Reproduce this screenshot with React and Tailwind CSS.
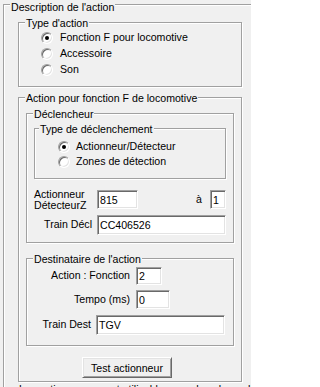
import React from "react";

const groupCls =
  "relative border border-[#a0a0a0] shadow-[inset_1px_1px_0_#ffffff,1px_1px_0_#ffffff]";

function Label({ children, className = "" }) {
  return (
    <span
      className={
        "absolute whitespace-nowrap bg-[#f0f0f0] px-[1px] leading-[12px] " + className
      }
    >
      {children}
    </span>
  );
}

function Radio({ checked }) {
  return (
    <span className="relative flex h-[12px] w-[12px] shrink-0 items-center justify-center rounded-full border border-t-[#a0a0a0] border-l-[#a0a0a0] border-r-white border-b-white bg-white shadow-[inset_1px_1px_0_#696969,inset_-1px_-1px_0_#e3e3e3]">
      {checked && <span className="h-[4px] w-[4px] rounded-full bg-black" />}
    </span>
  );
}

function Input({ value, className = "" }) {
  return (
    <div
      className={
        "flex items-center bg-white pl-[2px] leading-[12px] border border-t-[#a0a0a0] border-l-[#a0a0a0] border-r-white border-b-white shadow-[inset_1px_1px_0_#696969,inset_-1px_-1px_0_#e3e3e3] " +
        className
      }
    >
      {value}
    </div>
  );
}

export default function App() {
  return (
    <div className="h-[387px] w-[251px] overflow-hidden bg-[#f0f0f0] font-['Liberation_Sans',Arial,sans-serif] text-[10.6px] text-black">
      <div className={groupCls + " ml-[3px] mt-[4px] h-[420px] w-[270px] pt-[17px] pl-[14px]"}>
        <Label className="top-[-4px] left-[6px]">Description de l'action</Label>

        {/* Type d'action */}
        <div className={groupCls + " h-[65px] w-[224px] pt-[7px] pl-[22px]"}>
          <Label className="top-[-6px] left-[6px]">Type d'action</Label>
          <div className="flex h-[16px] items-center gap-[7px]">
            <Radio checked />
            <span>Fonction F pour locomotive</span>
          </div>
          <div className="flex h-[16px] items-center gap-[7px]">
            <Radio />
            <span>Accessoire</span>
          </div>
          <div className="flex h-[16px] items-center gap-[7px]">
            <Radio />
            <span>Son</span>
          </div>
        </div>

        {/* Action pour fonction F */}
        <div className={groupCls + " mt-[10px] h-[285px] w-[224px] pt-[15px] pl-[7px]"}>
          <Label className="top-[-6px] left-[6px]">Action pour fonction F de locomotive</Label>

          {/* Déclencheur */}
          <div className={groupCls + " h-[130px] w-[208px] pt-[14px] pl-[7px]"}>
            <Label className="top-[-6px] left-[6px]">Déclencheur</Label>

            <div className={groupCls + " h-[51px] w-[192px] pt-[10px] pl-[23px]"}>
              <Label className="top-[-6px] left-[4px]">Type de déclenchement</Label>
              <div className="flex h-[15px] items-center gap-[6px]">
                <Radio checked />
                <span>Actionneur/Détecteur</span>
              </div>
              <div className="flex h-[15px] items-center gap-[6px]">
                <Radio />
                <span>Zones de détection</span>
              </div>
            </div>

            <div className="mt-[10px] flex h-[22px] w-[192px] items-start">
              <div className="w-[63px] leading-[11px]">
                <div>Actionneur</div>
                <div>DétecteurZ</div>
              </div>
              <Input value="815" className="mt-[1px] h-[19px] w-[41px]" />
              <div className="flex-1" />
              <div className="mt-[1px] flex h-[19px] items-center">à</div>
              <Input value="1" className="mt-[1px] ml-[8px] h-[19px] w-[16px]" />
            </div>

            <div className="mt-[4px] flex h-[20px] items-center">
              <div className="w-[63px] pr-[5px] text-right">Train Décl</div>
              <Input value="CC406526" className="h-[20px] w-[129px]" />
            </div>
          </div>

          {/* Destinataire */}
          <div className={groupCls + " mt-[15px] h-[88px] w-[208px] pt-[8px]"}>
            <Label className="top-[-6px] left-[6px]">Destinataire de l'action</Label>
            <div className="flex h-[18px] items-center">
              <div className="w-[109px] pr-[6px] text-right whitespace-nowrap">Action : Fonction</div>
              <Input value="2" className="h-[18px] w-[26px]" />
            </div>
            <div className="mt-[5px] flex h-[19px] items-center">
              <div className="w-[109px] pr-[6px] text-right">Tempo (ms)</div>
              <Input value="0" className="h-[19px] w-[34px]" />
            </div>
            <div className="mt-[6px] flex h-[20px] items-center">
              <div className="w-[69px] pr-[5px] text-right">Train Dest</div>
              <Input value="TGV" className="h-[20px] w-[129px]" />
            </div>
          </div>

          <button className="mt-[11px] ml-[56px] flex h-[21px] w-[90px] items-center justify-center bg-[#f0f0f0] leading-[12px] border border-t-white border-l-white border-r-[#696969] border-b-[#696969] shadow-[inset_1px_1px_0_#e3e3e3,inset_-1px_-1px_0_#a0a0a0]">
            Test actionneur
          </button>
        </div>

        <div className="mt-[1px] ml-[1px] whitespace-nowrap leading-[12px]">
          Les actions ne seront utilisables que dans le mode
        </div>
      </div>
    </div>
  );
}
